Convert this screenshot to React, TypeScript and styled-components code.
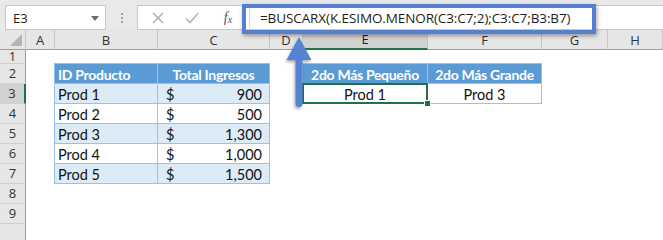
import styled, { createGlobalStyle } from "styled-components"

const GlobalStyle = createGlobalStyle`
	html, body {
		margin: 0;
		padding: 0;
		background: #ffffff;
		overflow: hidden;
	}
	body {
		font-family: "Open Sans", "Noto Sans", sans-serif;
	}
`

const COLS = ["A", "B", "C", "D", "E", "F", "G", "H"]
const ROWS = [1, 2, 3, 4, 5, 6, 7, 8, 9, 10]

const products = [
	{ id: "Prod 1", total: "900" },
	{ id: "Prod 2", total: "500" },
	{ id: "Prod 3", total: "1,300" },
	{ id: "Prod 4", total: "1,000" },
	{ id: "Prod 5", total: "1,500" },
]

export default function App() {
	return (
		<>
			<GlobalStyle />
			<Window>
				<FormulaBar>
					<NameBox>
						<span>E3</span>
						<DropCaret />
					</NameBox>
					<Grip>
						<i />
						<i />
						<i />
					</Grip>
					<FormulaBox>
						<BarButton>
							<svg width="12" height="12" viewBox="0 0 12 12">
								<path d="M1 1 L11 11 M11 1 L1 11" stroke="#a9a9a9" strokeWidth="1.4" fill="none" />
							</svg>
						</BarButton>
						<BarButton>
							<svg width="14" height="12" viewBox="0 0 14 12">
								<path d="M1 6.5 L5 10.5 L13 1.5" stroke="#b4b4b4" strokeWidth="1.6" fill="none" />
							</svg>
						</BarButton>
						<FxLabel>
							f<sub>x</sub>
						</FxLabel>
						<FormulaDivider />
						<FormulaText>=BUSCARX(K.ESIMO.MENOR(C3:C7;2);C3:C7;B3:B7)</FormulaText>
					</FormulaBox>
					<Highlight />
				</FormulaBar>

				<Sheet>
					<Corner />
					{COLS.map((c) => (
						<ColHeader key={c} $active={c === "E"}>
							{c}
						</ColHeader>
					))}
					{ROWS.map((r) => (
						<RowHeader key={r} style={{ gridRow: r + 1 }} $active={r === 3}>
							{r < 10 ? r : ""}
						</RowHeader>
					))}

					<DataTable $col="3 / 5" $row="3 / 9" $cols="103px 112px">
						<Cell $tone="head">ID Producto</Cell>
						<Cell $tone="head" $align="center">
							Total Ingresos
						</Cell>
						{products.map((p, i) => (
							<Row key={p.id}>
								<Cell $tone={i % 2 === 0 ? "band" : "plain"}>{p.id}</Cell>
								<Money $tone={i % 2 === 0 ? "band" : "plain"}>
									<span>$</span>
									<span>{p.total}</span>
								</Money>
							</Row>
						))}
					</DataTable>

					<DataTable $col="6 / 8" $row="3 / 5" $cols="125px 114px">
						<Cell $tone="head" $align="center">
							2do Más Pequeño
						</Cell>
						<Cell $tone="head" $align="center">
							2do Más Grande
						</Cell>
						<Cell $tone="plain" $align="center" $selected>
							Prod 1
							<FillHandle />
						</Cell>
						<Cell $tone="plain" $align="center">
							Prod 3
						</Cell>
					</DataTable>
				</Sheet>

				<Arrow width="30" height="80" viewBox="0 0 30 80">
					<defs>
						<filter id="sh" x="-50%" y="-20%" width="200%" height="140%">
							<feDropShadow dx="-1" dy="2" stdDeviation="1.6" floodColor="#000" floodOpacity="0.35" />
						</filter>
					</defs>
					<path
						d="M15 1 L27.5 24 L18.5 24 L18.5 68 Q18.5 71 15 71 Q11.5 71 11.5 68 L11.5 24 L2.5 24 Z"
						fill="#5582d2"
						filter="url(#sh)"
					/>
				</Arrow>
			</Window>
		</>
	)
}

const Window = styled.div`
	position: relative;
	width: 663px;
	height: 240px;
	background: #ffffff;
	overflow: hidden;
	display: flex;
	flex-direction: column;
`

const FormulaBar = styled.div`
	position: relative;
	height: 40px;
	box-sizing: border-box;
	padding-top: 5px;
	padding-left: 5px;
	background: #e9e9e9;
	display: flex;
	align-items: flex-start;
`

const NameBox = styled.div`
	width: 101px;
	height: 25px;
	box-sizing: border-box;
	background: #ffffff;
	border: 1px solid #c8c8c8;
	display: flex;
	align-items: center;
	justify-content: space-between;
	padding: 0 6px 0 7px;
	font-size: 13px;
	color: #222222;
`

const DropCaret = styled.div`
	width: 0;
	height: 0;
	border-left: 4.5px solid transparent;
	border-right: 4.5px solid transparent;
	border-top: 5px solid #6d6d6d;
	margin-top: 1px;
`

const Grip = styled.div`
	width: 31px;
	height: 25px;
	display: flex;
	flex-direction: column;
	align-items: center;
	justify-content: center;
	gap: 2px;

	i {
		display: block;
		width: 2px;
		height: 2px;
		background: #a3a3a3;
	}
`

const FormulaBox = styled.div`
	flex: 1;
	height: 25px;
	box-sizing: border-box;
	background: #ffffff;
	border: 1px solid #c8c8c8;
	border-right: none;
	display: flex;
	align-items: center;
	padding-left: 3px;
`

const BarButton = styled.div`
	width: 34px;
	height: 100%;
	display: flex;
	align-items: center;
	justify-content: center;
`

const FxLabel = styled.div`
	width: 32px;
	text-align: center;
	font-family: "Liberation Serif", serif;
	font-style: italic;
	font-size: 14px;
	color: #555555;
	line-height: 1;
	padding-left: 6px;
	box-sizing: border-box;

	sub {
		font-size: 10px;
		vertical-align: baseline;
		position: relative;
		top: 1px;
	}
`

const FormulaDivider = styled.div`
	width: 1px;
	height: 21px;
	margin-left: 8px;
	background: #d8d8d8;
`

const FormulaText = styled.div`
	margin-left: 10px;
	font-family: "Open Sans", sans-serif;
	font-size: 13.5px;
	color: #1e1e1e;
	white-space: nowrap;
	letter-spacing: -0.1px;
`

const Highlight = styled.div`
	position: absolute;
	left: 242px;
	top: 4px;
	width: 354px;
	height: 30px;
	box-sizing: border-box;
	border: 4px solid #5580d0;
	box-shadow: 1px 2px 4px rgba(0, 0, 0, 0.35);
`

const Arrow = styled.svg`
	position: absolute;
	left: 284px;
	top: 36px;
	overflow: visible;
`

const Sheet = styled.div`
	display: grid;
	grid-template-columns: 26px 29px 103px 112px 33px 125px 114px 66px 1fr;
	grid-template-rows: 20px 14px repeat(9, 20px);
	font-family: "Lato", "Liberation Sans", sans-serif;
	font-size: 14.5px;
	color: #111111;
`

const Corner = styled.div`
	grid-row: 1;
	grid-column: 1;
	position: relative;
	background: #e6e6e6;
	border-right: 1px solid #c6c6c6;
	border-bottom: 1px solid #9e9e9e;

	&::after {
		content: "";
		position: absolute;
		right: 3px;
		bottom: 3px;
		width: 0;
		height: 0;
		border-left: 12px solid transparent;
		border-bottom: 12px solid #b5b5b5;
	}
`

const ColHeader = styled.div<{ $active?: boolean }>`
	grid-row: 1;
	box-sizing: border-box;
	display: flex;
	align-items: center;
	justify-content: center;
	font-family: "Open Sans", sans-serif;
	font-size: 13px;
	color: ${(p) => (p.$active ? "#1d1d1d" : "#333333")};
	background: ${(p) => (p.$active ? "#d2d2d2" : "#e6e6e6")};
	border-right: 1px solid #c6c6c6;
	border-bottom: ${(p) => (p.$active ? "2px solid #217346" : "1px solid #9e9e9e")};
`

const RowHeader = styled.div<{ $active?: boolean }>`
	grid-column: 1;
	box-sizing: border-box;
	display: flex;
	align-items: center;
	justify-content: center;
	font-family: "Open Sans", sans-serif;
	font-size: 13px;
	line-height: 13px;
	color: #333333;
	background: ${(p) => (p.$active ? "#d2d2d2" : "#e6e6e6")};
	border-bottom: 1px solid #d0d0d0;
	border-right: ${(p) => (p.$active ? "2px solid #217346" : "1px solid #9e9e9e")};
`

const DataTable = styled.div<{ $col: string; $row: string; $cols: string }>`
	grid-column: ${(p) => p.$col};
	grid-row: ${(p) => p.$row};
	margin: -1px 0 0 -1px;
	display: grid;
	grid-template-columns: ${(p) => p.$cols};
	grid-auto-rows: 1fr;
	border-left: 1px solid #9bc2e6;
	border-top: 1px solid #9bc2e6;
`

const Row = styled.div`
	display: contents;
`

type Tone = "head" | "band" | "plain"

const toneBg = (t: Tone) => (t === "head" ? "#5b9bd5" : t === "band" ? "#ddebf7" : "#ffffff")

const Cell = styled.div<{ $tone: Tone; $align?: "left" | "center"; $selected?: boolean }>`
	position: relative;
	box-sizing: border-box;
	display: flex;
	align-items: center;
	justify-content: ${(p) => (p.$align === "center" ? "center" : "flex-start")};
	padding: 1px 3px 0 3px;
	white-space: nowrap;
	background: ${(p) => toneBg(p.$tone)};
	color: ${(p) => (p.$tone === "head" ? "#ffffff" : "#111111")};
	font-weight: ${(p) => (p.$tone === "head" ? 700 : 400)};
	font-size: ${(p) => (p.$tone === "head" ? "14px" : "14.5px")};
	letter-spacing: ${(p) => (p.$tone === "head" ? "-0.3px" : "0")};
	border-right: 1px solid #9bc2e6;
	border-bottom: 1px solid #9bc2e6;

	${(p) =>
		p.$selected &&
		`
		&::after {
			content: "";
			position: absolute;
			left: -1px;
			top: -1px;
			right: -1px;
			bottom: -1px;
			border: 2px solid #217346;
			pointer-events: none;
		}
	`}
`

const Money = styled(Cell)`
	justify-content: space-between;
	padding: 1px 7px 0 8px;
`

const FillHandle = styled.div`
	position: absolute;
	right: -4px;
	bottom: -4px;
	width: 5px;
	height: 5px;
	background: #217346;
	border: 1px solid #ffffff;
	z-index: 2;
`
